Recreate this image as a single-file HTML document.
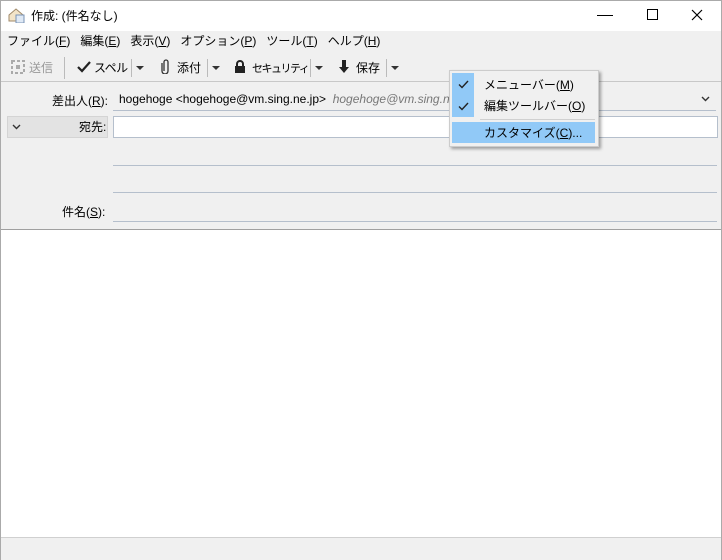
<html><head><style>
body{margin:0;width:722px;height:560px;position:relative;background:#fff;font-family:"Liberation Sans","Noto Sans CJK JP",sans-serif;font-size:12px;color:#000;overflow:hidden}
.a{position:absolute;white-space:nowrap}
u{text-decoration:underline}
.tri{position:absolute;width:0;height:0;border-left:4px solid transparent;border-right:4px solid transparent;border-top:4px solid #333}
</style></head><body>
<div class="a" style="left:0;top:0;width:722px;height:560px;border:1px solid #aaa;box-sizing:border-box"></div>
<svg class="a" style="left:8px;top:7px" width="17" height="16"><path d="M1 8 L8 2 L15 8 V14 H1Z" fill="#f3e4c8" stroke="#a08a6a"/><rect x="8" y="8" width="8" height="8" fill="#dfe9f5" stroke="#7a93b5"/></svg>
<div class="a" style="left:31px;top:7px">作成: (件名なし)</div>
<div class="a" style="left:597px;top:15px;width:16px;height:1px;background:#000"></div>
<div class="a" style="left:647px;top:9px;width:9px;height:9px;border:1px solid #000"></div>
<svg class="a" style="left:691px;top:9px" width="12" height="12"><path d="M1 1L11 11M11 1L1 11" stroke="#000" stroke-width="1.2"/></svg>
<div class="a" style="left:1px;top:31px;width:720px;height:198px;background:#f0f0f0;border-bottom:1px solid #a0a0a0"></div>
<div class="a" style="left:1px;top:81px;width:720px;height:1px;background:#c8c8c8"></div>
<div class="a" style="left:7px;top:32px">ファイル(<u>F</u>)&nbsp;&nbsp; 編集(<u>E</u>)&nbsp;&nbsp; 表示(<u>V</u>)&nbsp;&nbsp; オプション(<u>P</u>)&nbsp;&nbsp; ツール(<u>T</u>)&nbsp;&nbsp; ヘルプ(<u>H</u>)</div>
<svg class="a" style="left:11px;top:60px" width="14" height="14"><rect x="1" y="1" width="12" height="12" fill="none" stroke="#aaa" stroke-width="2" stroke-dasharray="3 2"/><rect x="5" y="5" width="4" height="4" fill="#aaa"/></svg>
<div class="a" style="left:29px;top:59px;color:#999">送信</div>
<div class="a" style="left:64px;top:57px;width:1px;height:22px;background:#bbb"></div>
<svg class="a" style="left:77px;top:61px" width="14" height="12"><path d="M1 6l4 4 8-9" fill="none" stroke="#222" stroke-width="2.2"/></svg>
<div class="a" style="left:94px;top:59px;letter-spacing:-0.5px">スペル</div>
<div class="a" style="left:131px;top:59px;width:1px;height:18px;background:#bbb"></div>
<div class="tri" style="left:136px;top:66px"></div>
<svg class="a" style="left:160px;top:59px" width="10" height="15"><path d="M3 12V3a2 2 0 0 1 4 0v9a3 3 0 0 1-6 0V4" fill="none" stroke="#333" stroke-width="1.3" transform="translate(1,0)"/></svg>
<div class="a" style="left:177px;top:59px">添付</div>
<div class="a" style="left:207px;top:59px;width:1px;height:18px;background:#bbb"></div>
<div class="tri" style="left:212px;top:66px"></div>
<svg class="a" style="left:234px;top:60px" width="12" height="13"><rect x="1" y="6" width="10" height="7" fill="#222"/><path d="M3 6V4a3 3 0 0 1 6 0v2" fill="none" stroke="#222" stroke-width="2"/></svg>
<div class="a" style="left:252px;top:60px;font-size:11px;letter-spacing:-1.5px">セキュリティ</div>
<div class="a" style="left:310px;top:59px;width:1px;height:18px;background:#bbb"></div>
<div class="tri" style="left:315px;top:66px"></div>
<svg class="a" style="left:338px;top:60px" width="12" height="13"><path d="M4 0h4v7h3l-5 6-5-6h3z" fill="#222"/></svg>
<div class="a" style="left:356px;top:59px">保存</div>
<div class="a" style="left:386px;top:59px;width:1px;height:18px;background:#bbb"></div>
<div class="tri" style="left:391px;top:66px"></div>
<div class="a" style="left:52px;top:92px">差出人(<u>R</u>):</div>
<div class="a" style="left:119px;top:92px">hogehoge &lt;hogehoge@vm.sing.ne.jp&gt; <span style="color:#777;font-style:italic">&nbsp;hogehoge@vm.sing.ne.jp</span></div>
<svg class="a" style="left:701px;top:96px" width="9" height="6"><path d="M1 1l3.5 3.5L8 1" fill="none" stroke="#333" stroke-width="1.4"/></svg>
<div class="a" style="left:113px;top:110px;width:603px;height:1px;background:#b5bfcc"></div>
<div class="a" style="left:7px;top:116px;width:101px;height:22px;background:#e3e3e3;border:1px solid #d4d4d4;box-sizing:border-box"></div>
<svg class="a" style="left:12px;top:124px" width="9" height="6"><path d="M1 1l3.5 3.5L8 1" fill="none" stroke="#333" stroke-width="1.4"/></svg>
<div class="a" style="left:79px;top:118px">宛先:</div>
<div class="a" style="left:113px;top:116px;width:605px;height:22px;background:#fff;border:1px solid #b5bfcc;box-sizing:border-box"></div>
<div class="a" style="left:113px;top:165px;width:604px;height:1px;background:#b5bfcc"></div>
<div class="a" style="left:113px;top:192px;width:604px;height:1px;background:#b5bfcc"></div>
<div class="a" style="left:62px;top:203px">件名(<u>S</u>):</div>
<div class="a" style="left:113px;top:221px;width:604px;height:1px;background:#b5bfcc"></div>
<div class="a" style="left:1px;top:537px;width:720px;height:22px;background:#f0f0f0;border-top:1px solid #d0d0d0"></div>
<div class="a" style="left:449px;top:70px;width:150px;height:77px;background:#f0f0f0;border:1px solid #ccc;box-sizing:border-box;box-shadow:2px 2px 3px rgba(0,0,0,.35)"></div>
<div class="a" style="left:452px;top:73px;width:22px;height:44px;background:#91c9f7"></div>
<svg class="a" style="left:458px;top:80px" width="11" height="9"><path d="M1 4.5l3 3L10 1" fill="none" stroke="#222" stroke-width="1.4"/></svg>
<svg class="a" style="left:458px;top:102px" width="11" height="9"><path d="M1 4.5l3 3L10 1" fill="none" stroke="#222" stroke-width="1.4"/></svg>
<div class="a" style="left:484px;top:76px">メニューバー(<u>M</u>)</div>
<div class="a" style="left:484px;top:97px">編集ツールバー(<u>O</u>)</div>
<div class="a" style="left:480px;top:119px;width:115px;height:1px;background:#d0d0d0"></div>
<div class="a" style="left:452px;top:122px;width:143px;height:21px;background:#91c9f7"></div>
<div class="a" style="left:484px;top:124px">カスタマイズ(<u>C</u>)...</div>
</body></html>
